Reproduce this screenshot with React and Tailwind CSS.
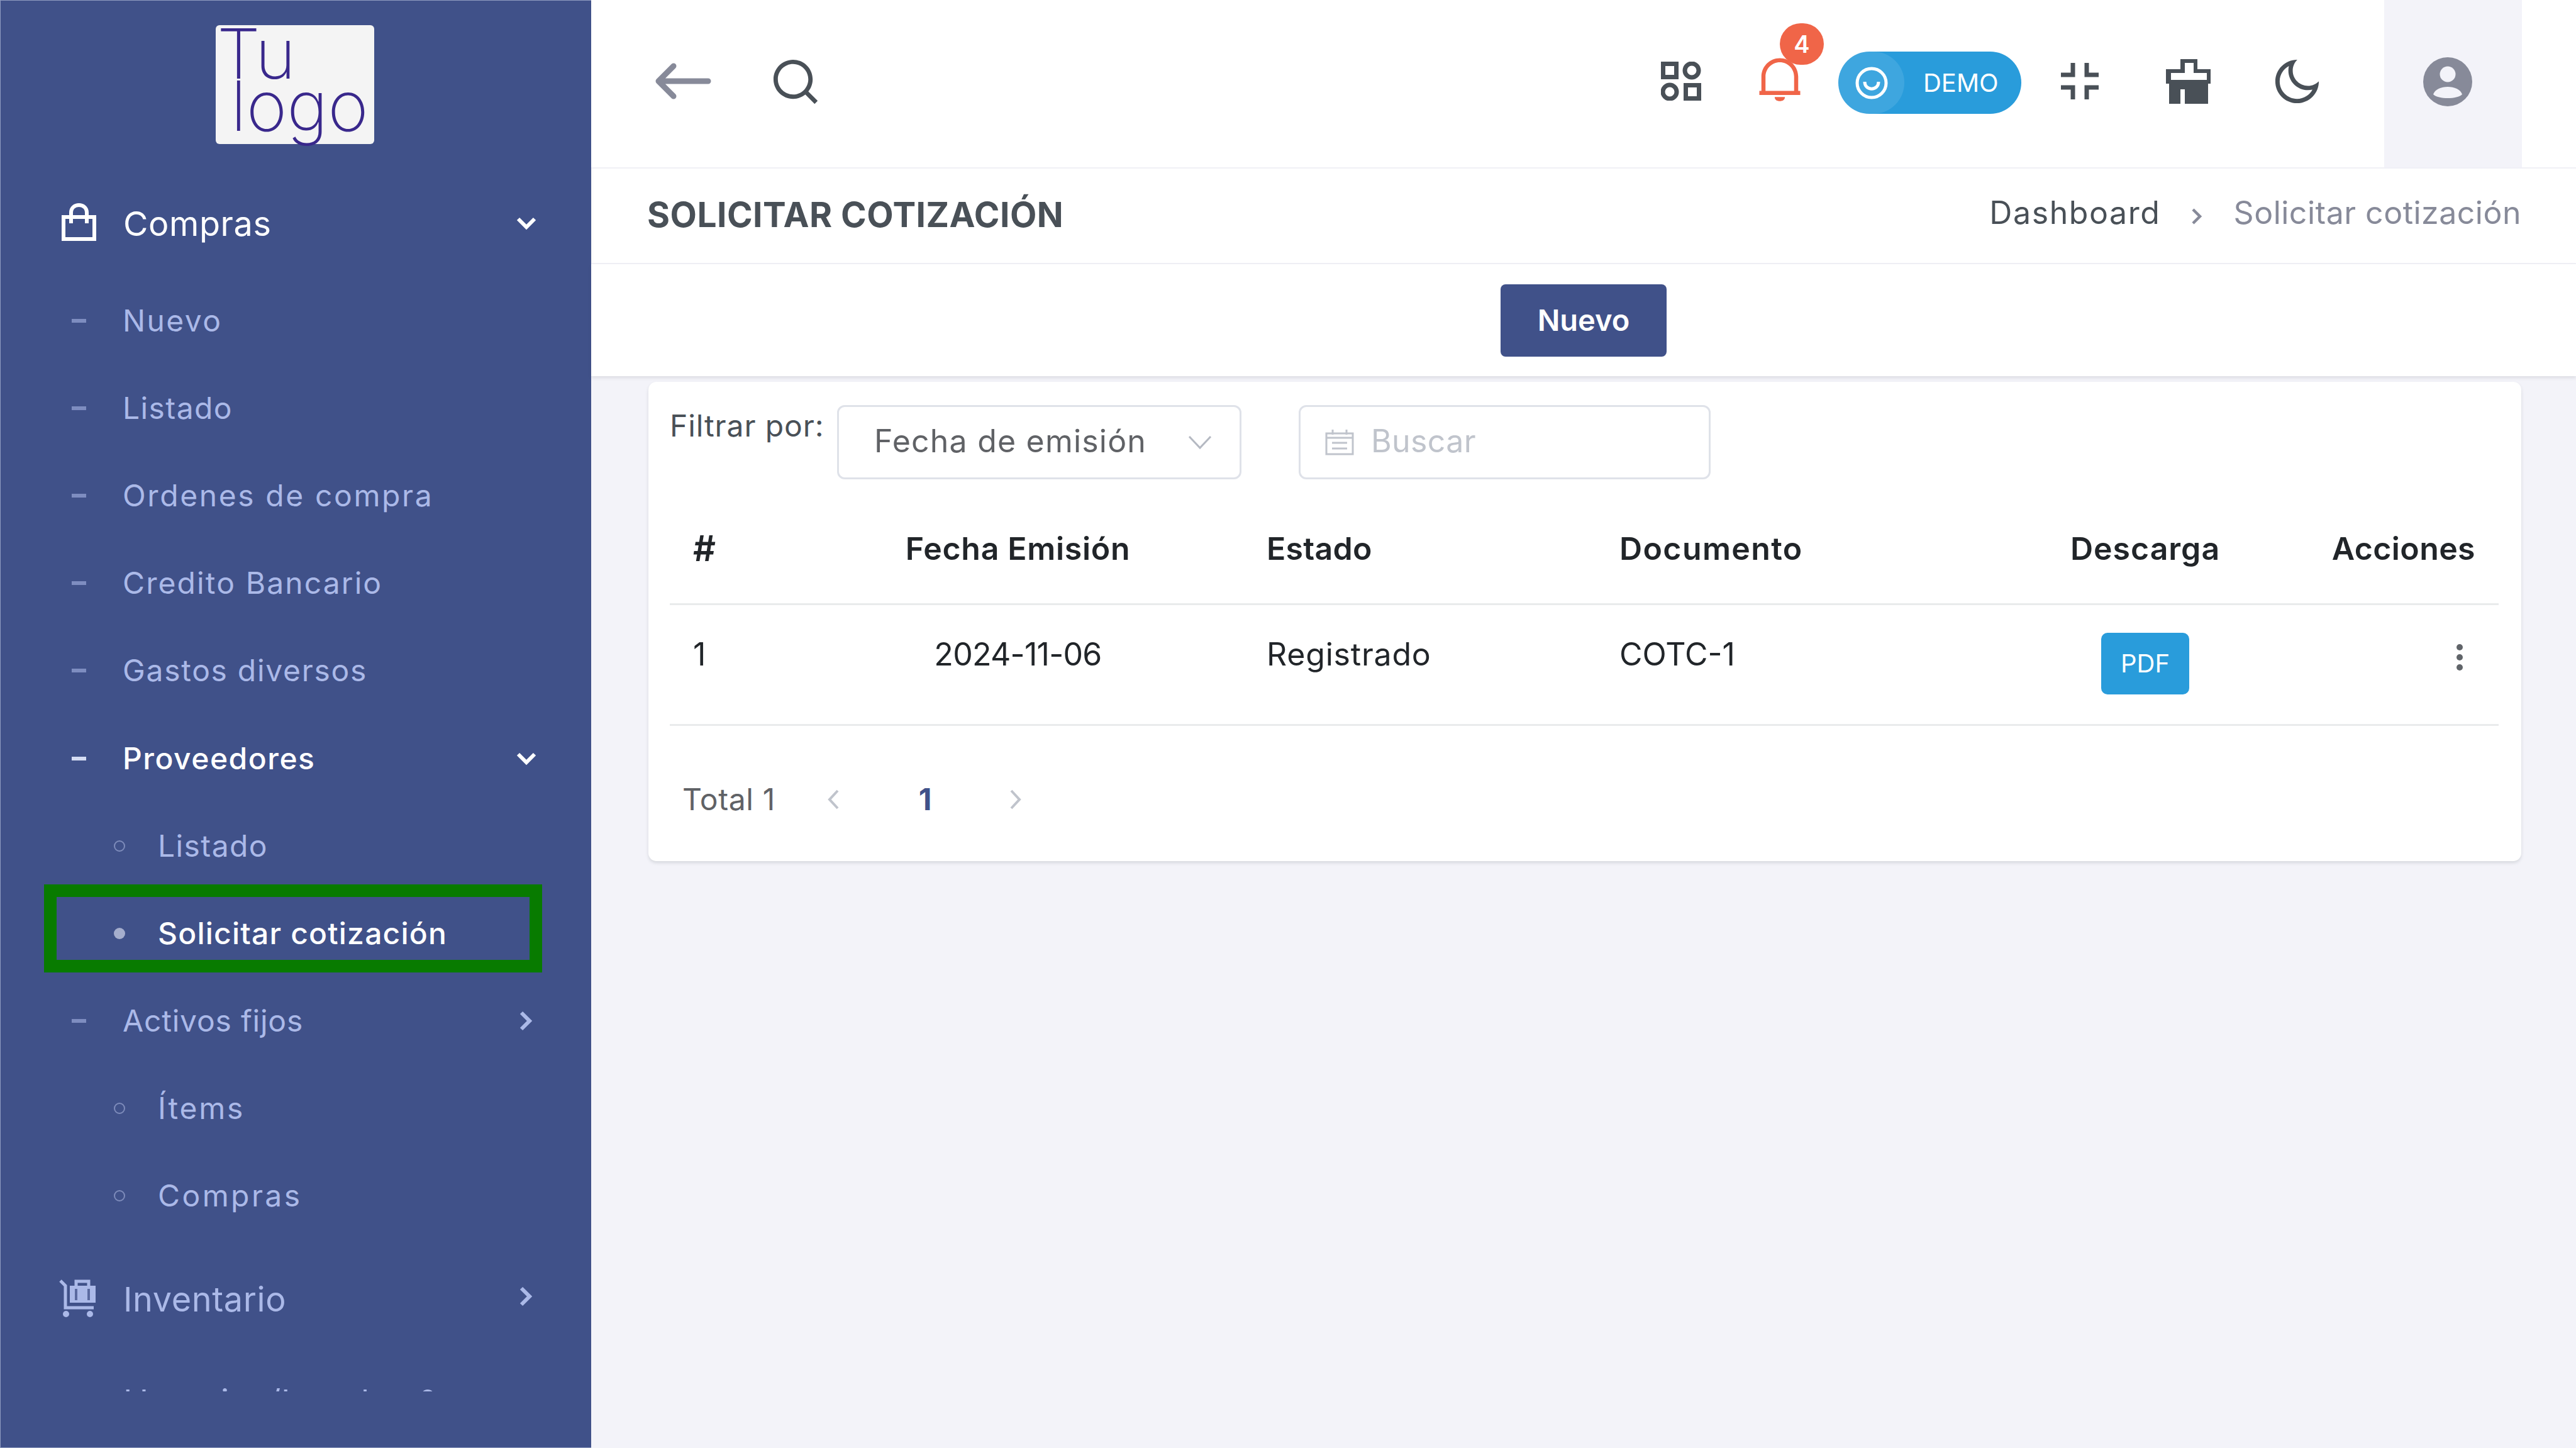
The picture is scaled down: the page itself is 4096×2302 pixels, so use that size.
const COL = "#abb9e8";

function ChevDown({ color = "#fff" }) {
  return (
    <svg width="34" height="22" viewBox="0 0 34 22" className="ml-auto mr-[86px] shrink-0">
      <path d="M4 4 L17 17 L30 4" fill="none" stroke={color} strokeWidth="6" />
    </svg>
  );
}
function ChevRight({ color = COL, className = "" }) {
  return (
    <svg width="22" height="34" viewBox="0 0 22 34" className={"ml-auto mr-[93px] shrink-0 " + className}>
      <path d="M4 4 L17 17 L4 30" fill="none" stroke={color} strokeWidth="6" />
    </svg>
  );
}
function Dash({ active }) {
  return <span className={"ml-[113px] mr-[58px] h-[6px] w-[23px] shrink-0 " + (active ? "bg-[#d5dcf3]" : "bg-[#7e8dc0]")} />;
}
function Bullet({ active }) {
  return active ? (
    <span className="ml-[180px] mr-[52px] h-[18px] w-[18px] shrink-0 rounded-full bg-[#a5aecd]" />
  ) : (
    <span className="ml-[180px] mr-[52px] h-[18px] w-[18px] shrink-0 rounded-full border-[2.5px] border-[#7e8cbb]" />
  );
}
function SubRow({ label, kind, active, right, track }) {
  return (
    <div className={"relative flex h-[139.2px] items-center text-[48px] " + track + " " + (active ? "font-medium text-white" : "text-[#abb9e8]")}>
      {kind === "dash" ? <Dash active={active} /> : <Bullet active={active} />}
      <span>{label}</span>
      {right}
    </div>
  );
}
function BagIcon() {
  return (
    <svg width="55" height="60" viewBox="0 0 55 60" className="mb-[5px] ml-[97px] mr-[43px] shrink-0">
      <rect x="3" y="22" width="49" height="35" fill="none" stroke="#fff" strokeWidth="6" />
      <path d="M15 32 V15 C15 -1 40 -1 40 15 V32" fill="none" stroke="#fff" strokeWidth="6" />
    </svg>
  );
}
function CartIcon() {
  return (
    <svg width="62" height="64" viewBox="0 0 62 64" className="mb-[4px] ml-[90px] mr-[43px] shrink-0">
      <path d="M5 5 L13 13 V48 H58" fill="none" stroke={COL} strokeWidth="5" />
      <rect x="20" y="13" width="41" height="27" fill={COL} />
      <path d="M30 13 V6 H50 V13" fill="none" stroke={COL} strokeWidth="5" />
      <rect x="28" y="18" width="4" height="18" fill="#5b6aa0" />
      <rect x="48" y="18" width="4" height="18" fill="#5b6aa0" />
      <circle cx="14" cy="58" r="5" fill={COL} />
      <circle cx="52" cy="58" r="5" fill={COL} />
    </svg>
  );
}

function Sidebar() {
  return (
    <aside className="flex w-[940px] shrink-0 flex-col border-y border-l border-[#8f9bc0] bg-[#405189]">
      <div className="ml-[342px] mt-[39px] h-[189px] w-[252px] rounded-[6px] bg-[#f4f4f4] pl-[2px] text-[110px] font-extralight leading-[83px] tracking-[0px] text-[#39288c]">
        <div className="pt-[4px]">Tu</div>
        <div className="pl-[22px]">logo</div>
      </div>
      <nav className="mt-[41px] h-[1942px] overflow-hidden">
        <div className="flex h-[170px] items-center text-[54px] tracking-[0.6px] text-white">
          <BagIcon />
          <span>Compras</span>
          <ChevDown />
        </div>
        <SubRow label="Nuevo" kind="dash" track="tracking-[2.4px]" />
        <SubRow label="Listado" kind="dash" track="tracking-[1.4px]" />
        <SubRow label="Ordenes de compra" kind="dash" track="tracking-[2.6px]" />
        <SubRow label="Credito Bancario" kind="dash" track="tracking-[2.1px]" />
        <SubRow label="Gastos diversos" kind="dash" track="tracking-[1.7px]" />
        <SubRow label="Proveedores" kind="dash" active track="tracking-[1.5px]" right={<ChevDown />} />
        <SubRow label="Listado" kind="dot" track="tracking-[1.4px]" />
        <div className="relative">
          <SubRow label="Solicitar cotización" kind="dot" active track="tracking-[1.2px]" />
          <div className="absolute left-[69px] top-[-8px] h-[140px] w-[792px] border-[20px] border-[#087b00]" />
        </div>
        <SubRow label="Activos fijos" kind="dash" track="tracking-[0.8px]" right={<ChevRight />} />
        <SubRow label="Ítems" kind="dot" track="tracking-[2.8px]" />
        <SubRow label="Compras" kind="dot" track="tracking-[3.4px]" />
        <div className="mt-[9px] flex h-[170px] items-center text-[54px] tracking-[0.6px] text-[#abb9e8]">
          <CartIcon />
          <span>Inventario</span>
          <ChevRight className="mb-[8px]" />
        </div>
        <div className="flex h-[156px] items-center pl-[195px] text-[54px] tracking-[0.6px] text-[#abb9e8]">
          <span className="whitespace-nowrap">Usuarios/Locales &amp;</span>
        </div>
      </nav>
    </aside>
  );
}

function TopBar() {
  return (
    <header className="flex h-[266px] shrink-0 items-stretch bg-white">
      <div className="flex h-[258px] items-center">
        <svg width="90" height="60" viewBox="0 0 90 60" className="ml-[101px] shrink-0">
          <path d="M85 30 H8 M30 6 L6 30 L30 54" fill="none" stroke="#878a99" strokeWidth="9" strokeLinecap="round" strokeLinejoin="round" />
        </svg>
        <svg width="83" height="83" viewBox="0 0 24 24" fill="#495057" className="ml-[92px] shrink-0">
          <path d="M18.031 16.6168L22.3137 20.8995L20.8995 22.3137L16.6168 18.031C15.0769 19.263 13.124 20 11 20C6.032 20 2 15.968 2 11C2 6.032 6.032 2 11 2C15.968 2 20 6.032 20 11C20 13.124 19.263 15.0769 18.031 16.6168ZM16.0247 15.8748C17.2475 14.6146 18 12.8956 18 11C18 7.1325 14.8675 4 11 4C7.1325 4 4 7.1325 4 11C4 14.8675 7.1325 18 11 18C12.8956 18 14.6146 17.2475 15.8748 16.0247L16.0247 15.8748Z" />
        </svg>
      </div>
      <div className="ml-auto flex h-[258px] items-center">
        <svg width="64" height="62" viewBox="0 0 64 62" className="shrink-0" fill="none" stroke="#495057" strokeWidth="7">
          <rect x="3.5" y="3.5" width="21" height="21" />
          <circle cx="49" cy="14" r="11" />
          <circle cx="14" cy="48" r="11" />
          <rect x="39.5" y="37.5" width="21" height="21" />
        </svg>
        <div className="relative ml-[92px] h-[78px] w-[65px] shrink-0">
          <svg width="78" height="78" viewBox="0 0 24 24" fill="#f06548" className="absolute left-[-6px] top-[-4px]">
            <path d="M22 20H2V18H3V11.0314C3 6.04348 7.02944 2 12 2C16.9706 2 21 6.04348 21 11.0314V18H22V20ZM5 18H19V11.0314C19 7.14806 15.866 4 12 4C8.13401 4 5 7.14806 5 11.0314V18ZM9.5 21H14.5C14.5 22.3807 13.3807 23 12 23C10.6193 23 9.5 22.3807 9.5 21Z" />
          </svg>
          <span className="absolute left-[33px] top-[-53px] flex h-[66px] w-[70px] items-center justify-center rounded-full bg-[#f06548] text-[38px] font-semibold text-white">4</span>
        </div>
        <div className="ml-[61px] mt-[5px] flex h-[99px] w-[291px] shrink-0 items-center rounded-full bg-[#299cdb]">
          <span className="flex h-[99px] w-[105px] items-center justify-center rounded-full bg-white/10">
            <svg width="54" height="54" viewBox="0 0 54 54" fill="none" stroke="#fff" strokeWidth="5">
              <circle cx="27" cy="27" r="23" />
              <path d="M16 25 C16 40 38 40 38 25" />
            </svg>
          </span>
          <span className="ml-[30px] text-[40px] tracking-[0px] text-white">DEMO</span>
        </div>
        <svg width="60" height="58" viewBox="0 0 60 58" fill="none" stroke="#495057" strokeWidth="7" className="ml-[63px] shrink-0">
          <path d="M0 19 H19 V0 M60 19 H41 V0 M0 39 H19 V58 M60 39 H41 V58" />
        </svg>
        <svg width="71" height="71" viewBox="0 0 71 71" fill="#495057" className="ml-[107px] shrink-0">
          <path fillRule="evenodd" d="M23 0H50V16H71V39H67V71H5V39H0V16H23ZM30 6V22H8V33H65V22H44V6ZM23 48V71H30V48Z" />
        </svg>
        <svg width="83" height="83" viewBox="0 0 24 24" fill="#495057" className="ml-[96px] shrink-0">
          <path d="M10 7C10 10.866 13.134 14 17 14C18.9584 14 20.729 13.1957 21.9995 11.8995C22 11.933 22 11.9665 22 12C22 17.5228 17.5228 22 12 22C6.47715 22 2 17.5228 2 12C2 6.47715 6.47715 2 12 2C12.0335 2 12.067 2 12.1005 2.00049C10.8043 3.27098 10 5.04157 10 7ZM4 12C4 16.4183 7.58172 20 12 20C15.0583 20 17.7158 18.2839 19.062 15.7621C18.3945 15.9187 17.7035 16 17 16C12.0294 16 8 11.9706 8 7C8 6.29648 8.08133 5.60547 8.2379 4.938C5.71611 6.28423 4 8.9417 4 12Z" />
        </svg>
      </div>
      <div className="ml-[97px] mr-[86px] flex w-[219px] shrink-0 items-start bg-[#f3f3f9] pl-[61px] pt-[90px]">
        <svg width="80" height="80" viewBox="0 0 80 80">
          <circle cx="40" cy="40" r="39" fill="#878a99" />
          <ellipse cx="40" cy="28" rx="12.5" ry="12.5" fill="#f3f3f9" />
          <path d="M17 60 C22 44 58 44 63 60 C55 68 25 68 17 60Z" fill="#f3f3f9" />
        </svg>
      </div>
    </header>
  );
}

function TitleBar() {
  return (
    <div className="flex h-[154px] shrink-0 items-center justify-between border-y-[2px] border-[#f0f0f6] bg-white pl-[89px] pr-[87px] shadow-[inset_6px_0_6px_-6px_rgba(0,0,0,0.08)]">
      <h1 className="pb-[4px] text-[55px] font-bold tracking-[0.5px] text-[#495057]">SOLICITAR COTIZACIÓN</h1>
      <div className="flex items-center text-[50px]">
        <span className="pb-[10px] tracking-[1.6px] text-[#495057]">Dashboard</span>
        <svg width="20" height="30" viewBox="0 0 20 30" fill="none" stroke="#878a99" strokeWidth="4.5" className="ml-[47px] mr-[49px] mt-[2px]">
          <path d="M4 4 L15 15 L4 26" />
        </svg>
        <span className="pb-[10px] tracking-[0.5px] text-[#878a99]">Solicitar cotización</span>
      </div>
    </div>
  );
}

function ActionBar() {
  return (
    <div className="flex h-[178px] shrink-0 items-center justify-center bg-white shadow-[0_3px_5px_rgba(56,65,74,0.12)]">
      <button className="flex h-[115px] w-[264px] items-center justify-center rounded-[8px] bg-[#405189] text-[47px] font-semibold text-white">Nuevo</button>
    </div>
  );
}

const GRID = "grid grid-cols-[195px_717px_561px_610px_526px_299px]";

function Card() {
  return (
    <section className="ml-[91px] mr-[87px] mt-[9px] h-[762px] rounded-[13px] bg-white pl-[34px] pr-[36px] pt-[37px] shadow-[0_3px_5px_rgba(56,65,74,0.15)]">
      <div className="flex h-[118px] items-start">
        <span className="w-[266px] shrink-0 text-[48px] leading-[66px] tracking-[0.9px] text-[#495057]">Filtrar por:</span>
        <div className="flex h-[118px] w-[643px] shrink-0 items-center rounded-[12px] border-[3px] border-[#dfe2e9] pl-[56px] text-[50px] tracking-[1.2px] text-[#606266]">
          <span className="pb-[4px]">Fecha de emisión</span>
          <svg width="40" height="24" viewBox="0 0 40 24" fill="none" stroke="#b5b9c2" strokeWidth="3" className="ml-auto mr-[43px]">
            <path d="M3 3 L20 21 L37 3" />
          </svg>
        </div>
        <div className="ml-[91px] flex h-[118px] w-[655px] shrink-0 items-center rounded-[12px] border-[3px] border-[#dfe2e9] pl-[39px] text-[50px] tracking-[0.4px] text-[#c0c4cc]">
          <svg width="46" height="42" viewBox="0 0 46 42" fill="none" stroke="#c0c4cc" strokeWidth="3">
            <rect x="2" y="7" width="42" height="33" />
            <path d="M2 14 H44 M12 1 V9 M34 1 V9 M11 22 H35 M11 31 H35" />
          </svg>
          <span className="ml-[27px] pb-[4px]">Buscar</span>
        </div>
      </div>
      <div className={GRID + " mt-[23px] h-[177px] items-center border-b-[3px] border-[#e9ebec] text-[50px] font-semibold text-[#212529]"}>
        <span className="pl-[37px] text-[56px]">#</span>
        <span className="text-center tracking-[0.7px]">Fecha Emisión</span>
        <span className="pl-[37px] tracking-[0.3px]">Estado</span>
        <span className="pl-[37px] tracking-[1.4px]">Documento</span>
        <span className="text-center tracking-[1px]">Descarga</span>
        <span className="pr-[37px] text-right tracking-[0.4px]">Acciones</span>
      </div>
      <div className={GRID + " h-[192px] items-start border-b-[3px] border-[#e9ebec] text-[50px] leading-[60px] text-[#212529]"}>
        <span className="pl-[37px] pt-[48px]">1</span>
        <span className="pt-[48px] text-center tracking-[-0.7px]">2024-11-06</span>
        <span className="pl-[37px] pt-[48px] tracking-[0.8px]">Registrado</span>
        <span className="pl-[37px] pt-[48px]">COTC-1</span>
        <div className="flex justify-center pt-[44px]">
          <button className="h-[98px] w-[140px] rounded-[10px] bg-[#299cdb] text-[40px] text-white">PDF</button>
        </div>
        <div className="flex flex-col items-end gap-[6px] pr-[57px] pt-[62px]">
          <span className="h-[10px] w-[10px] rounded-full bg-[#606469]" />
          <span className="h-[10px] w-[10px] rounded-full bg-[#606469]" />
          <span className="h-[10px] w-[10px] rounded-full bg-[#606469]" />
        </div>
      </div>
      <div className="flex h-[215px] items-center pl-[20px] pt-[19px] text-[48px]">
        <span className="w-[148px] tracking-[0.6px] text-[#606266]">Total 1</span>
        <svg width="20" height="34" viewBox="0 0 20 34" fill="none" stroke="#c0c4cc" strokeWidth="4" className="ml-[82px]">
          <path d="M17 3 L4 17 L17 31" />
        </svg>
        <span className="ml-[121px] w-[30px] text-center font-bold text-[#405189]">1</span>
        <svg width="20" height="34" viewBox="0 0 20 34" fill="none" stroke="#c0c4cc" strokeWidth="4" className="ml-[119px]">
          <path d="M3 3 L16 17 L3 31" />
        </svg>
      </div>
    </section>
  );
}

export default function App() {
  return (
    <div className="flex h-[2302px] w-[4096px] overflow-hidden bg-[#f3f3f9] [font-family:Inter,sans-serif]">
      <Sidebar />
      <main className="flex min-w-0 flex-1 flex-col">
        <TopBar />
        <TitleBar />
        <ActionBar />
        <Card />
      </main>
    </div>
  );
}
